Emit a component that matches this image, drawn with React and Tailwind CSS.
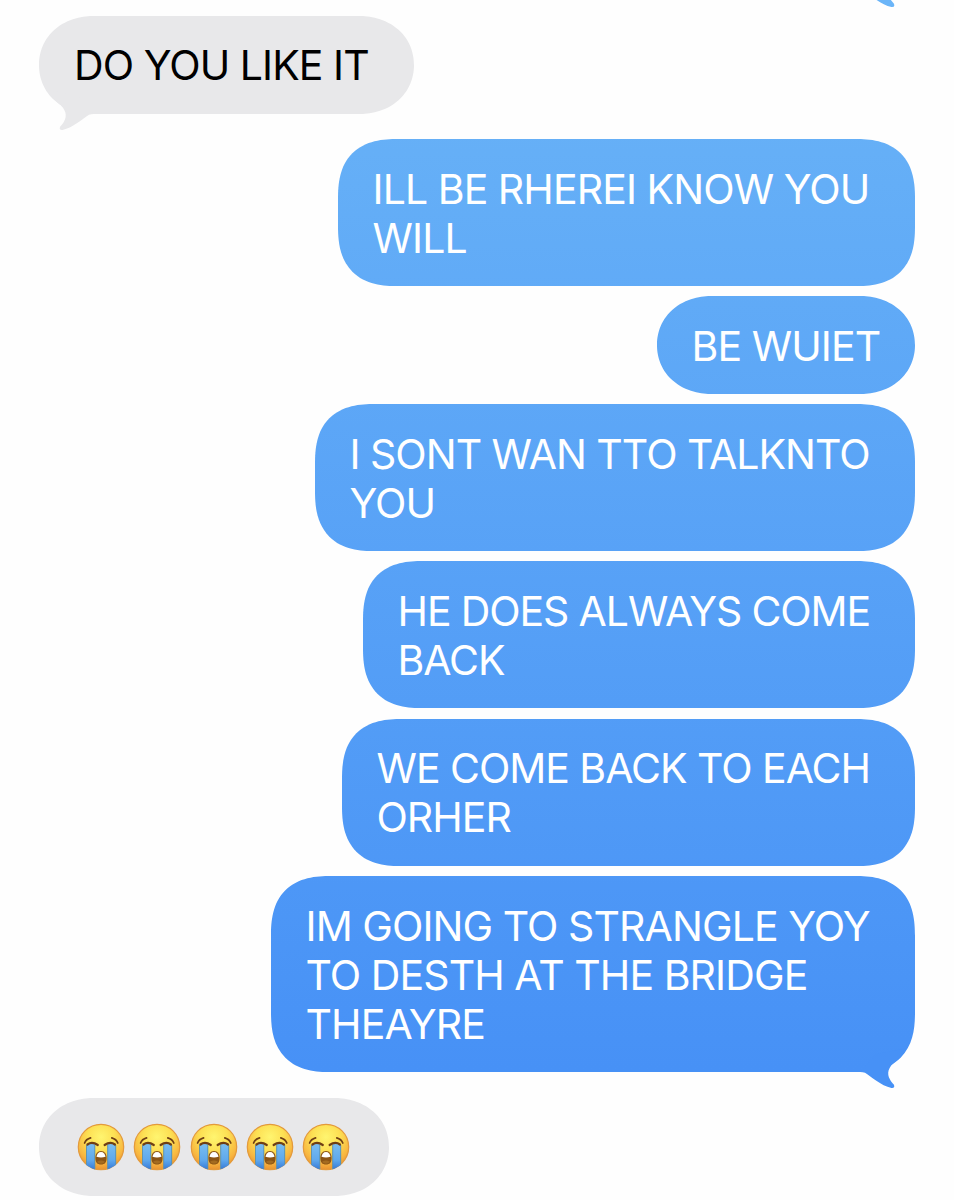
import React from 'react';
import clsx from 'clsx';

const messages = [
  { id: 1, from: 'them', lines: ['DO YOU LIKE IT'], size: 'mt-[15.5px] w-[375px]', tail: true },
  { id: 2, from: 'me', lines: ['ILL BE RHEREI KNOW YOU', 'WILL'], size: 'mt-[25.5px] w-[577px]' },
  { id: 3, from: 'me', lines: ['BE WUIET'], size: 'mt-[10.3px] w-[258px]' },
  { id: 4, from: 'me', lines: ['I SONT WAN TTO TALKNTO', 'YOU'], size: 'mt-[10px] w-[600px] tracking-[-0.95px]' },
  { id: 5, from: 'me', lines: ['HE DOES ALWAYS COME', 'BACK'], size: 'mt-[10px] w-[552px] tracking-[-1.07px]' },
  { id: 6, from: 'me', lines: ['WE COME BACK TO EACH', 'ORHER'], size: 'mt-[10.4px] w-[573px] tracking-[-0.98px]' },
  {
    id: 7,
    from: 'me',
    lines: ['IM GOING TO STRANGLE YOY', 'TO DESTH AT THE BRIDGE', 'THEAYRE'],
    size: 'mt-[10.4px] w-[644px]',
    tail: true,
  },
  { id: 8, from: 'them', emojis: 5, size: 'mt-[25.6px] w-[350px]' },
];

const Tail = ({ className }) => (
  <svg viewBox="0 0 40 36" className={clsx('absolute w-10 h-9 overflow-visible', className)} fill="currentColor">
    <path d="M44.500 -4 C41.500 2 38 5.500 34 9 C26 15 24.500 21.500 28 27.500 C29 29.500 30.500 31 31.800 32.600 Q33.500 36.300 29.500 36 C19 34 8.500 24 3 20.800 Q1 20 -2 20 L14 2 Z" />
  </svg>
);

const CryingFace = () => (
  <svg viewBox="0 0 48 48" className="w-12 h-12 shrink-0" role="img" aria-label="😭">
    <defs>
      <radialGradient id="skin" cx="0.5" cy="0.28" r="0.75">
        <stop offset="0" stopColor="#fff570" />
        <stop offset="0.4" stopColor="#fde054" />
        <stop offset="0.75" stopColor="#f8b640" />
        <stop offset="1" stopColor="#e78d2e" />
      </radialGradient>
      <linearGradient id="tear" x1="0" y1="0" x2="0" y2="1">
        <stop offset="0" stopColor="#78bdf0" />
        <stop offset="0.6" stopColor="#5fa8ec" />
        <stop offset="1" stopColor="#2f72d4" />
      </linearGradient>
      <clipPath id="face">
        <circle cx="24" cy="24" r="23.200" />
      </clipPath>
    </defs>
    <circle cx="24" cy="24" r="22.700" fill="url(#skin)" stroke="#e39a3c" strokeWidth="1.200" />
    <g clipPath="url(#face)">
      <path d="M9.500 21 H18 V48 H9.500 Z M30.500 21 H39 V48 H30.500 Z" fill="url(#tear)" />
      <path d="M9.500 22 V44 M17.800 22 V47 M30.700 22 V47 M38.700 22 V44" stroke="#5a91ae" strokeWidth="0.900" fill="none" />
    </g>
    <g fill="none" stroke="#6f3f14" strokeLinecap="round">
      <path d="M7.600 20 Q9 16.200 13.600 14.900 M40.800 20 Q39.300 16.200 34.800 14.900" strokeWidth="1.700" />
      <path d="M10.500 21.500 Q15 18.200 20.800 22 M27.600 22 Q33.400 18.200 37.900 21.500" strokeWidth="2.200" />
    </g>
    <path d="M24 28 C20.300 28 18.400 31 18.400 35 C18.400 39.500 20.300 41.500 24 41.500 C27.700 41.500 29.600 39.500 29.600 35 C29.600 31 27.700 28 24 28 Z" fill="#8b5414" />
    <path d="M19.500 33.800 C19.900 31 21.300 28.900 24 28.900 C26.700 28.900 28.100 31 28.500 33.800 Q24 35 19.500 33.800 Z" fill="#fff" />
    <path d="M20 38.800 Q24 36 28 38.800 Q27 40.700 24 40.700 Q21 40.700 20 38.800 Z" fill="#a46b20" />
  </svg>
);

const Bubble = ({ message }) => {
  const mine = message.from === 'me';
  const tall = message.lines?.length > 1;

  return (
    <div
      className={clsx(
        'relative py-[24.5px]',
        tall ? 'rounded-[60px] [corner-shape:superellipse(1.34)]' : 'rounded-[55px/49px] [corner-shape:superellipse(1.07)]',
        mine
          ? 'self-end pl-[34.5px] text-white bg-fixed bg-[linear-gradient(to_bottom,#6ab4f7_0px,#4690f6_1100px)]'
          : 'self-start pl-[35px] text-black bg-[#e8e8ea]',
        message.size
      )}
    >
      {message.tail && (
        <Tail className={mine ? 'right-[13px] -bottom-4 text-[#4791f6]' : 'left-[13px] -bottom-4 text-[#e8e8ea] -scale-x-100'} />
      )}
      {message.emojis ? (
        <div className="flex items-center h-[49px] gap-[8.3px] pl-[3px]">
          {Array.from({ length: message.emojis }, (_, i) => (
            <CryingFace key={i} />
          ))}
        </div>
      ) : (
        message.lines.map((line) => (
          <p key={line} className="relative top-[1.1px] h-[49px] leading-[49px] whitespace-nowrap">
            {line}
          </p>
        ))
      )}
    </div>
  );
};

export default function App() {
  return (
    <main className="relative w-[954px] h-[1200px] overflow-hidden bg-[#fefefe] flex flex-col pl-[39px] pr-[39px] font-['Inter','Liberation_Sans',sans-serif] text-[41px] font-[380] tracking-[-0.88px] [word-spacing:-0.2px] antialiased">
      {/* end of the message scrolled off the top */}
      <Tail className="right-[52px] -top-[29px] text-[#6bb5f8]" />
      {messages.map((message) => (
        <Bubble key={message.id} message={message} />
      ))}
    </main>
  );
}
